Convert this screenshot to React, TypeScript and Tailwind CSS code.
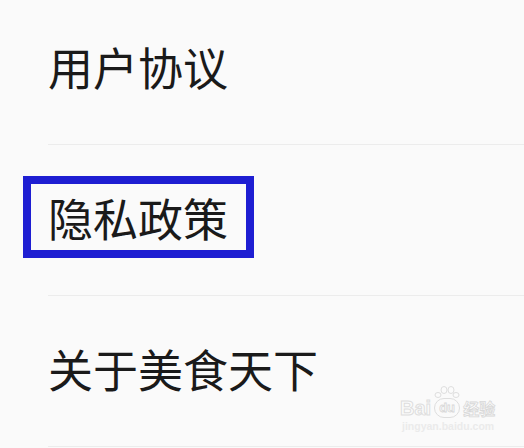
import React from "react";

const font = { fontFamily: '"Noto Sans CJK SC", "Noto Sans", sans-serif' };
const latin = { fontFamily: '"Liberation Sans", Arial, sans-serif' };

function Row({ label, boxed }: { label: string; boxed?: boolean }) {
  return (
    <div className="ml-[48px] h-[151px] border-b border-[#ececec] flex items-center pb-[6px]">
      <span className="relative text-[45px] leading-[45px] text-[#1a1a1a]">
        {label}
        {boxed && (
          <span className="absolute left-[-25px] top-[-19px] w-[231px] h-[82px] border-[8px] border-[#1e1ed2]" />
        )}
      </span>
    </div>
  );
}

function Watermark() {
  return (
    <div className="absolute left-[400px] top-[386px] flex flex-col items-start gap-[2px] select-none">
      <div className="flex items-end gap-[3px]">
        <span
          className="text-[20px] leading-[20px] font-bold"
          style={{ ...latin, color: "#fbfbfb", WebkitTextStroke: "1px #dedede" }}
        >
          Bai
        </span>
        <div className="flex flex-col items-center">
          <svg width="26" height="12" viewBox="0 0 26 12">
            <g fill="#fbfbfb" stroke="#dedede" strokeWidth="1">
              <ellipse cx="4" cy="9" rx="3" ry="2.5" />
              <ellipse cx="10" cy="4" rx="3" ry="3.5" />
              <ellipse cx="17" cy="4" rx="3" ry="3.5" />
              <ellipse cx="22" cy="9" rx="3" ry="2.5" />
            </g>
          </svg>
          <span
            className="w-[26px] h-[20px] rounded-[10px] border border-[#dedede] text-center text-[13px] leading-[18px] font-bold"
            style={{ ...latin, color: "#fbfbfb", WebkitTextStroke: "0.8px #d8d8d8" }}
          >
            du
          </span>
        </div>
        <span
          className="text-[16px] leading-[20px] font-bold"
          style={{ ...font, color: "#fbfbfb", WebkitTextStroke: "0.8px #d8d8d8" }}
        >
          经验
        </span>
      </div>
      <span
        className="pl-[2px] text-[10.5px] leading-[12px] font-bold"
        style={{ ...latin, color: "#ebebeb" }}
      >
        jingyan.baidu.com
      </span>
    </div>
  );
}

export default function App() {
  return (
    <div className="relative w-[524px] h-[448px] overflow-hidden bg-[#fafafa]" style={font}>
      <div className="mt-[-6px] flex flex-col">
        <Row label="用户协议" />
        <Row label="隐私政策" boxed />
        <Row label="关于美食天下" />
      </div>
      <Watermark />
    </div>
  );
}
